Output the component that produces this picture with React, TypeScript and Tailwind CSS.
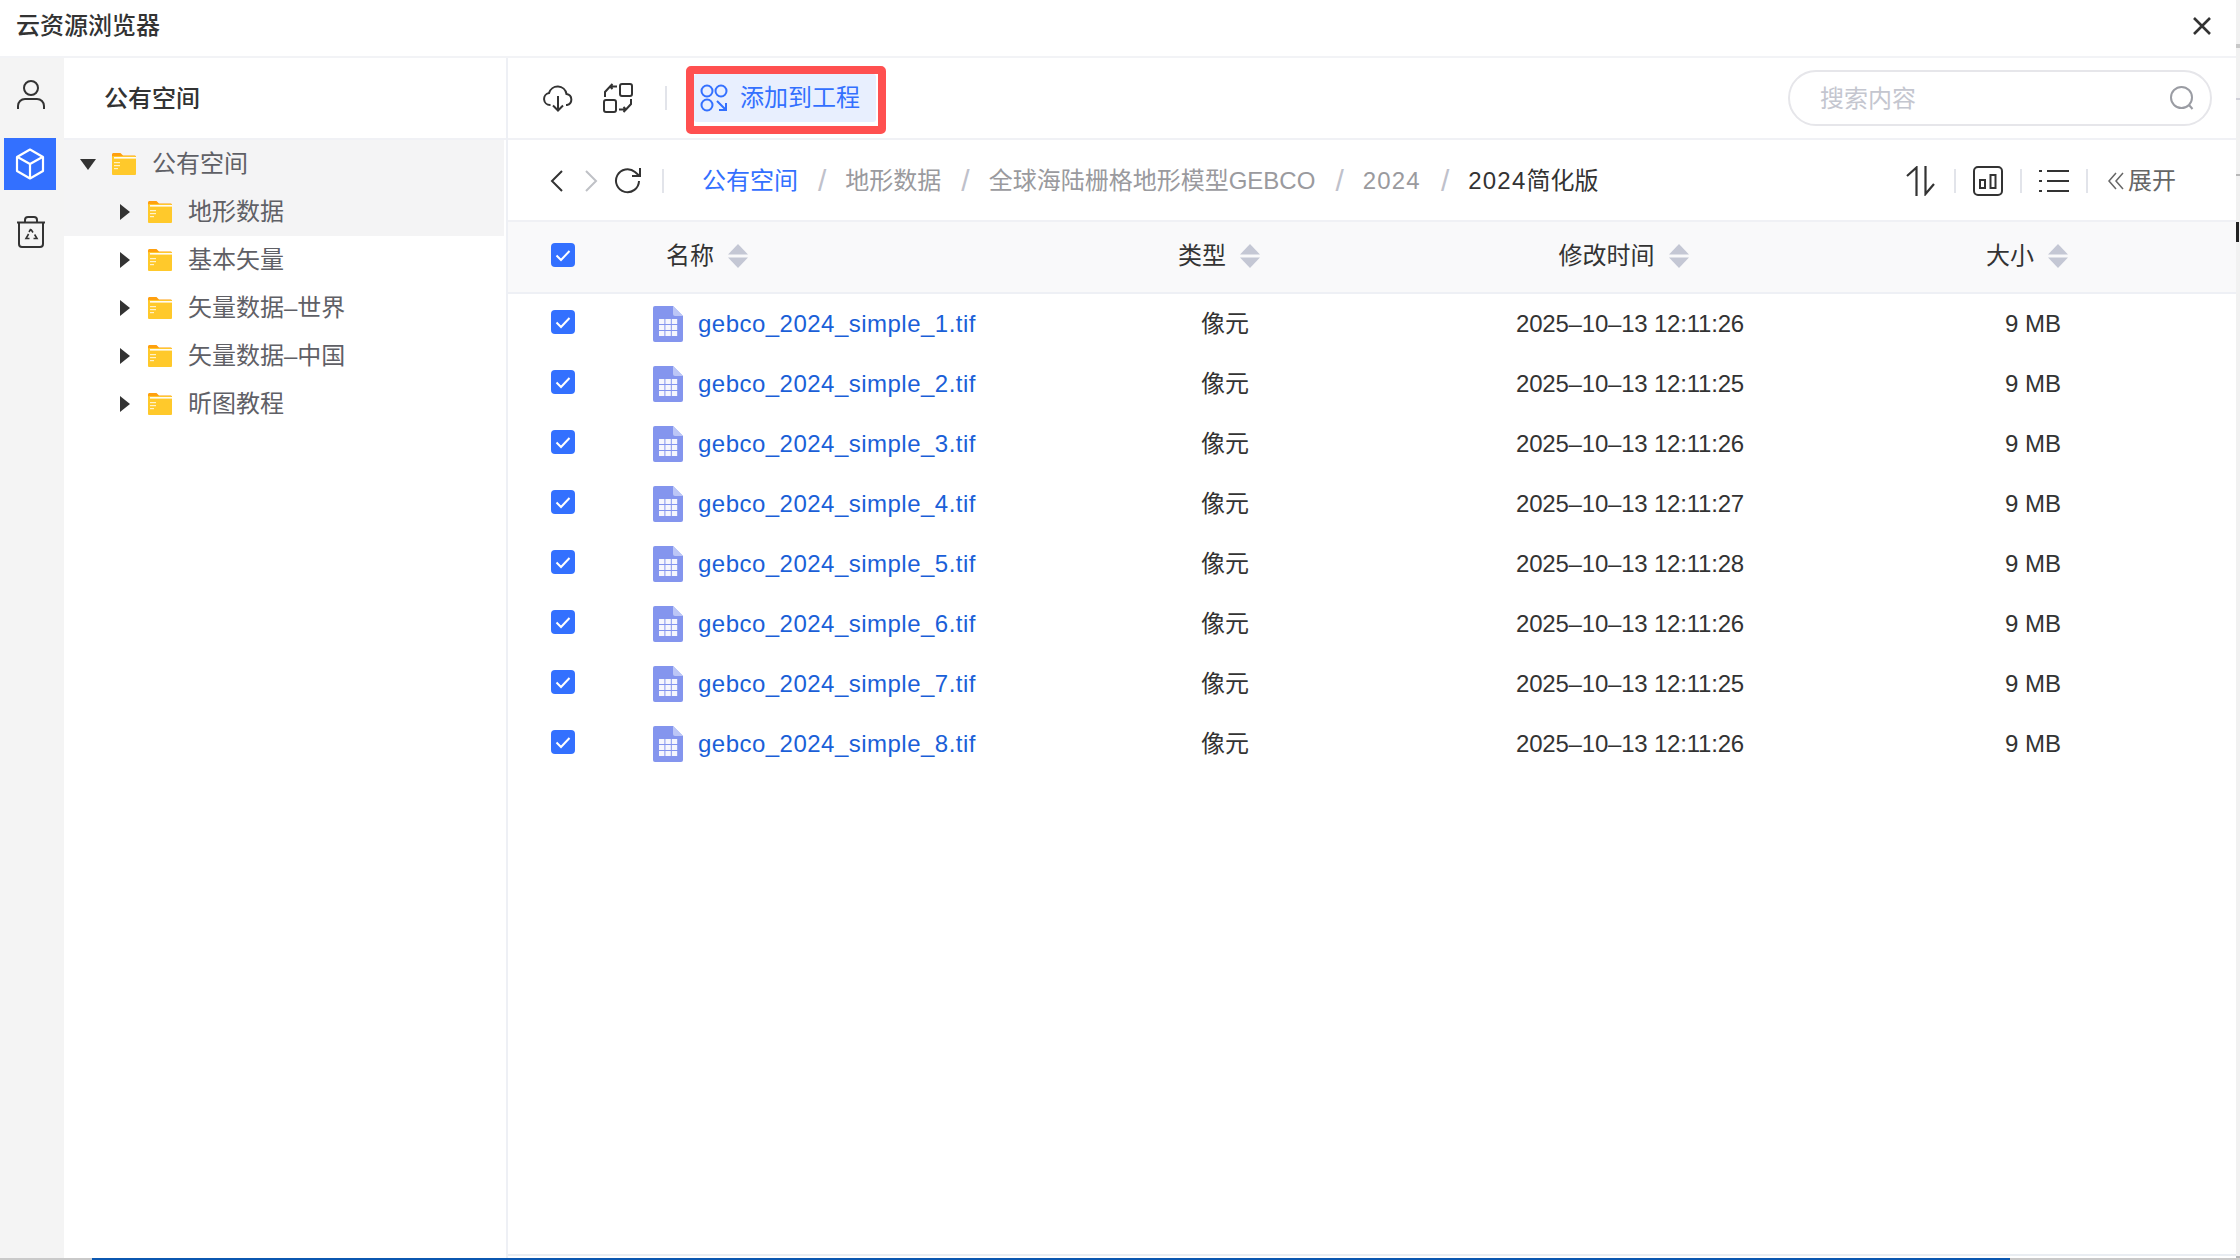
import React from "react";

const FONT = '"Liberation Sans", "Noto Sans CJK SC", sans-serif';

function Folder() {
  return (
    <svg width="24" height="22" viewBox="0 0 24 22" className="shrink-0">
      <path d="M0 1.5C0 .7.7 0 1.5 0h7l2.5 2.5h11.5c.8 0 1.5.7 1.5 1.5v4H0z" fill="#ffa00f" />
      <rect x="0" y="3" width="24" height="19" rx="1" fill="#ffc92b" />
      <rect x="2" y="4" width="22" height="1.6" fill="#fff" opacity="0.95" />
      <rect x="2" y="9" width="6" height="1.2" fill="#fff" opacity="0.75" />
      <rect x="2" y="12" width="6" height="1.2" fill="#fff" opacity="0.75" />
      <rect x="2" y="15" width="4" height="1.2" fill="#fff" opacity="0.75" />
    </svg>
  );
}

function Tri({ down }: { down?: boolean }) {
  return down ? (
    <svg width="16" height="11" viewBox="0 0 16 11" className="shrink-0"><path d="M0 0h16L8 11z" fill="#333" /></svg>
  ) : (
    <svg width="10" height="16" viewBox="0 0 10 16" className="shrink-0"><path d="M0 0l10 8-10 8z" fill="#333" /></svg>
  );
}

function TreeRow({ label, level, hover }: { label: string; level: 0 | 1; hover?: boolean }) {
  return (
    <div className={`h-[48px] flex items-center mr-[2px] ${hover ? "bg-[#f4f4f5]" : ""}`}>
      {level === 0 ? (
        <div className="flex items-center pl-[16px]">
          <Tri down />
          <div className="ml-[16px]"><Folder /></div>
          <span className="ml-[16px]">{label}</span>
        </div>
      ) : (
        <div className="flex items-center pl-[56px]">
          <Tri />
          <div className="ml-[18px]"><Folder /></div>
          <span className="ml-[16px]">{label}</span>
        </div>
      )}
    </div>
  );
}

function Sort() {
  return (
    <svg width="20" height="24" viewBox="0 0 20 24" className="shrink-0 ml-[14px]">
      <path d="M10 0l10 10.5H0z" fill="#c4c7d4" />
      <path d="M0 13.5h20L10 24z" fill="#c4c7d4" />
    </svg>
  );
}

function Check() {
  return (
    <div className="w-[24px] h-[24px] rounded-[4px] bg-[#3370ff] flex items-center justify-center -mt-[4px]">
      <svg width="16" height="13" viewBox="0 0 16 13"><path d="M1.5 6.5l4.5 4.5L14.5 2" fill="none" stroke="#fff" strokeWidth="2" /></svg>
    </div>
  );
}

function FileIcon() {
  return (
    <svg width="30" height="36" viewBox="0 0 30 36" className="shrink-0">
      <path d="M2 0h18l10 10v24a2 2 0 0 1-2 2H2a2 2 0 0 1-2-2V2a2 2 0 0 1 2-2z" fill="#8495ee" />
      <path d="M20 0l10 10h-8a2 2 0 0 1-2-2z" fill="#bcc6f6" />
      <g fill="#fff" opacity="0.92">
        <rect x="6" y="13" width="5.4" height="5" /><rect x="12.4" y="13" width="5.4" height="5" /><rect x="18.8" y="13" width="5.4" height="5" />
        <rect x="6" y="19" width="5.4" height="5" /><rect x="12.4" y="19" width="5.4" height="5" /><rect x="18.8" y="19" width="5.4" height="5" />
        <rect x="6" y="25" width="5.4" height="5" /><rect x="12.4" y="25" width="5.4" height="5" /><rect x="18.8" y="25" width="5.4" height="5" />
      </g>
    </svg>
  );
}

const stroke = { fill: "none", stroke: "#333", strokeWidth: 2 } as const;

const rows = [
  ["gebco_2024_simple_1.tif", "2025–10–13 12:11:26"],
  ["gebco_2024_simple_2.tif", "2025–10–13 12:11:25"],
  ["gebco_2024_simple_3.tif", "2025–10–13 12:11:26"],
  ["gebco_2024_simple_4.tif", "2025–10–13 12:11:27"],
  ["gebco_2024_simple_5.tif", "2025–10–13 12:11:28"],
  ["gebco_2024_simple_6.tif", "2025–10–13 12:11:26"],
  ["gebco_2024_simple_7.tif", "2025–10–13 12:11:25"],
  ["gebco_2024_simple_8.tif", "2025–10–13 12:11:26"],
];

function VDiv({ cls }: { cls: string }) {
  return <div className={`w-[2px] h-[24px] bg-[#e2e4ea] shrink-0 ${cls}`} />;
}

function Slash() {
  return <span className="ml-[20px] mr-[19px] text-[#bfc1cb] text-[30px]">/</span>;
}

const GRID = "grid grid-cols-[145px_447px_250px_560px_246px_80px] items-center";

export default function App() {
  return (
    <div className="w-[2240px] h-[1260px] flex flex-col overflow-hidden bg-white text-[24px] leading-[32px]" style={{ fontFamily: FONT }}>
      <div className="flex flex-1 min-h-0">
        <div className="w-[2236px] flex flex-col bg-white">
          {/* title bar */}
          <div className="h-[58px] shrink-0 border-b-2 border-[#f2f3f6] flex items-center justify-between pl-[16px] pr-[24px]">
            <span className="font-medium text-[#333] -mt-[5px]">云资源浏览器</span>
            <svg width="20" height="20" viewBox="0 0 20 20" className="-mt-[4px]"><path d="M2 2l16 16M18 2L2 18" fill="none" stroke="#333" strokeWidth="2.6" /></svg>
          </div>

          <div className="flex flex-1 min-h-0">
            {/* icon rail */}
            <div className="w-[64px] shrink-0 bg-[#f4f4f4] flex flex-col">
              <div className="h-[80px] flex items-center justify-center pr-[2px]">
                <svg width="30" height="32" viewBox="0 0 30 32" className="-mt-[6px]" {...stroke}>
                  <circle cx="15" cy="9" r="7" strokeWidth="2" />
                  <path d="M2 30v-3a7 7 0 0 1 7-7h12a7 7 0 0 1 7 7v3" />
                </svg>
              </div>
              <div className="mx-[4px] w-[52px] h-[52px] bg-[#3370ff] flex items-center justify-center">
                <svg width="30" height="32" viewBox="0 0 30 32" fill="none" stroke="#fff" strokeWidth="2.2" strokeLinejoin="round">
                  <path d="M15 1.5l13 7.5v14l-13 7.5L2 23V9z" />
                  <path d="M2.5 9L15 16l12.5-7M15 16v14.5" />
                </svg>
              </div>
              <div className="flex justify-center mt-[26px] pr-[2px]">
                <svg width="30" height="32" viewBox="0 0 30 32" {...stroke}>
                  <path d="M3 7v21a3 3 0 0 0 3 3h18a3 3 0 0 0 3-3V7M1 6.500h28M9 6V4a3 3 0 0 1 3-3h6a3 3 0 0 1 3 3v2" />
                  <path d="M15 13.500l2 3M12.600 18l-2.600 4.500h3.500M17.500 22.500H21l-2.400-4M13 16l1.800-3" strokeWidth="1.6" />
                </svg>
              </div>
            </div>

            {/* tree panel */}
            <div className="w-[444px] shrink-0 border-r-2 border-[#eef0f5] flex flex-col text-[#5f6066]">
              <div className="h-[82px] shrink-0 border-b-2 border-[#f0f1f5] flex items-center pl-[40px] pt-[2px] font-medium text-[#333]">公有空间</div>
              <TreeRow label="公有空间" level={0} hover />
              <TreeRow label="地形数据" level={1} hover />
              <TreeRow label="基本矢量" level={1} />
              <TreeRow label="矢量数据–世界" level={1} />
              <TreeRow label="矢量数据–中国" level={1} />
              <TreeRow label="昕图教程" level={1} />
            </div>

            {/* main */}
            <div className="flex-1 min-w-0 flex flex-col">
              {/* toolbar */}
              <div className="h-[82px] shrink-0 border-b-2 border-[#f0f1f5] flex items-center pl-[35px]">
                <svg width="30" height="28" viewBox="0 0 30 28" {...stroke}>
                  <path d="M7.500 21H7A6 6 0 0 1 6 9.100 9 9 0 0 1 23.500 10 5.600 5.600 0 0 1 24 21h-1" />
                  <path d="M15 12v14M10 21.500l5 5 5-5" />
                </svg>
                <svg width="30" height="30" viewBox="0 0 30 30" className="ml-[30px]" {...stroke}>
                  <rect x="17" y="1" width="12" height="12" rx="2" />
                  <rect x="1" y="17" width="12" height="12" rx="2" />
                  <path d="M2 14V9l5-5.500h7M9.500 1L7 3.500 9.500 6M28 16v5l-5 5.500h-7M20.500 29l2.500-2.500L20.500 24" />
                </svg>
                <VDiv cls="ml-[32px]" />
                <div className="ml-[19px] mt-[4px] w-[200px] h-[68px] border-[8px] border-[#ff5050] rounded-[5px] bg-white flex items-start">
                  <div className="w-[182px] h-[48px] bg-[#e8effe] rounded-[3px] flex items-center pl-[6px] text-[#3370ff]">
                    <svg width="28" height="28" viewBox="0 0 28 28" fill="none" stroke="#3370ff" strokeWidth="2" className="shrink-0">
                      <circle cx="7" cy="7" r="5.500" />
                      <circle cx="21" cy="7" r="5.500" />
                      <circle cx="7" cy="21" r="5.500" />
                      <path d="M17 17l9 9M26 19v7h-7" />
                    </svg>
                    <span className="ml-[12px]">添加到工程</span>
                  </div>
                </div>
                <div className="ml-auto mr-[24px] w-[424px] h-[56px] rounded-full border-2 border-[#e6e6ea] flex items-center justify-between pl-[30px] pr-[15px]">
                  <span className="text-[#c4c6cf] mt-[2px]">搜索内容</span>
                  <svg width="26" height="26" viewBox="0 0 26 26" fill="none" stroke="#9a9ca3" strokeWidth="2">
                    <circle cx="12.500" cy="12.500" r="10.500" />
                    <path d="M20 20l3.500 4" />
                  </svg>
                </div>
              </div>

              {/* breadcrumb row */}
              <div className="h-[82px] shrink-0 border-b-2 border-[#f0f1f5] flex items-center pl-[42px] pt-[2px] whitespace-nowrap">
                <svg width="14" height="22" viewBox="0 0 14 22" {...stroke}><path d="M12 1L2 11l10 10" /></svg>
                <svg width="14" height="22" viewBox="0 0 14 22" fill="none" stroke="#bfc1c6" strokeWidth="2" className="ml-[20px]"><path d="M2 1l10 10L2 21" /></svg>
                <svg width="28" height="28" viewBox="0 0 28 28" className="ml-[16px]" {...stroke}>
                  <path d="M25 14a11.500 11.500 0 1 1-4-9l4 3.500M26 1v8h-8" />
                </svg>
                <VDiv cls="ml-[20px]" />
                <span className="ml-[38px] text-[#3370ff]">公有空间</span>
                <Slash />
                <span className="text-[#9a9a9e]">地形数据</span>
                <Slash />
                <span className="text-[#9a9a9e]">全球海陆栅格地形模型GEBCO</span>
                <Slash />
                <span className="text-[#9a9a9e] tracking-[1.2px]">2024</span>
                <Slash />
                <span className="text-[#333]"><span className="tracking-[1.2px]">2024</span>简化版</span>

                <div className="ml-auto flex items-center mr-[60px]">
                  <svg width="30" height="30" viewBox="0 0 30 30" {...stroke} strokeWidth="2.200">
                    <path d="M1 10l9.500-8.500V30M19.500 0v28L28 18" />
                  </svg>
                  <VDiv cls="ml-[18px]" />
                  <svg width="30" height="30" viewBox="0 0 30 30" className="ml-[17px]" {...stroke}>
                    <rect x="1" y="1" width="28" height="28" rx="4" />
                    <rect x="7" y="14" width="5" height="8" />
                    <rect x="17.500" y="9" width="5" height="13" />
                  </svg>
                  <VDiv cls="ml-[17px]" />
                  <svg width="30" height="24" viewBox="0 0 30 24" className="ml-[17px]" {...stroke}>
                    <path d="M0 2h3M0 12h3M0 22h3M8 2h22M8 12h22M8 22h22" />
                  </svg>
                  <VDiv cls="ml-[17px]" />
                  <svg width="16" height="18" viewBox="0 0 16 18" fill="none" stroke="#666" strokeWidth="1.500" className="ml-[20px]">
                    <path d="M8 1L1 9l7 8M15 1L8 9l7 8" />
                  </svg>
                  <span className="ml-[4px] text-[#666]">展开</span>
                </div>
              </div>

              {/* table head */}
              <div className={`${GRID} h-[72px] shrink-0 bg-[#f9f9fa] border-b-2 border-[#eef0f5] text-[#333]`}>
                <div className="pl-[43px]"><Check /></div>
                <div className="flex items-center pl-[13px] pb-[2px]">名称<Sort /></div>
                <div className="flex items-center justify-center pr-[12px] pb-[2px]">类型<Sort /></div>
                <div className="flex items-center justify-center pr-[13px] pb-[2px]">修改时间<Sort /></div>
                <div className="flex items-center justify-center pr-[12px] pb-[2px]">大小<Sort /></div>
              </div>

              {/* table body */}
              <div className="flex-1 min-h-0 text-[#333]">
                {rows.map(([name, time]) => (
                  <div key={name} className={`${GRID} h-[60px]`}>
                    <div className="pl-[43px]"><Check /></div>
                    <div className="flex items-center">
                      <FileIcon />
                      <span className="ml-[15px] text-[#1a5fd8] tracking-[0.48px]">{name}</span>
                    </div>
                    <div className="text-center">像元</div>
                    <div className="text-center tracking-[-0.2px]">{time}</div>
                    <div className="text-center">9 MB</div>
                  </div>
                ))}
              </div>
              <div className="h-[2px] shrink-0 bg-[#e9edf2] mb-[2px]" />
            </div>
          </div>
        </div>

        {/* sliver of what lies behind the window */}
        <div className="w-[4px] shrink-0 bg-[#f1f1f1] flex flex-col">
          <div className="h-[4px] mt-[44px] bg-[#c8c8c8]" />
          <div className="h-[2px] mt-[50px] bg-[#cfcfd8]" />
          <div className="h-[2px] mt-[74px] bg-[#b8b8b8]" />
          <div className="h-[20px] w-[3px] mt-[46px] bg-[#222]" />
          <div className="h-[2px] mt-[1014px] bg-[#b8b8b8]" />
        </div>
      </div>
      <div className="h-[2px] shrink-0 flex">
        <div className="w-[92px] bg-[#c9c9c9]" />
        <div className="flex-1 bg-[#0b57b0]" />
        <div className="w-[230px] bg-[#c9c9c9]" />
      </div>
    </div>
  );
}
